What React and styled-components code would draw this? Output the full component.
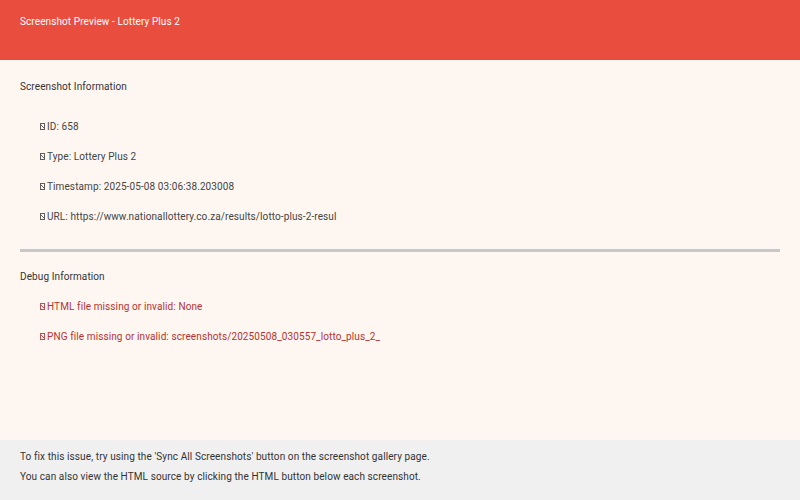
import React from 'react';
import styled, { createGlobalStyle } from 'styled-components';

const Global = createGlobalStyle`
  html, body { margin: 0; padding: 0; }
  body {
    width: 800px;
    height: 500px;
    overflow: hidden;
    font-family: Roboto, "Noto Sans", sans-serif;
    font-size: 10px;
    letter-spacing: 0.1px;
    background: #fef7f1;
  }
`;

const Page = styled.div`
  display: flex;
  flex-direction: column;
  height: 500px;
`;

const Header = styled.header`
  height: 60px;
  background: #e84d3d;
  color: #ffffff;
  padding: 16px 20px 0;
  line-height: 12px;
  box-sizing: border-box;
`;

const Main = styled.main`
  flex: 1;
  padding: 20px 20px 0;
  color: #333;
`;

const SectionTitle = styled.h3`
  margin: 0;
  font-size: 10px;
  font-weight: 400;
  line-height: 12px;
  padding-top: 1px;
`;

const List = styled.ul`
  list-style: none;
  margin: 0;
  padding: 0 0 0 20px;
  display: flex;
  flex-direction: column;
  gap: 18px;
  margin-top: ${p => p.$top}px;
`;

const Item = styled.li`
  line-height: 12px;
  height: 12px;
  color: ${p => (p.$error ? '#b83232' : '#444')};
  display: flex;
  align-items: center;
`;

const Tofu = styled.span`
  display: inline-block;
  width: 5px;
  height: 7px;
  border: 1px solid currentColor;
  box-sizing: border-box;
  margin: -1px 2px 0 0;
  opacity: 0.85;
  background:
    linear-gradient(45deg, transparent 45%, currentColor 45%, currentColor 55%, transparent 55%);
`;

const Divider = styled.hr`
  border: none;
  height: 3px;
  background: #c8c8c8;
  margin: 26px 0 18px;
`;

const Footer = styled.footer`
  height: 60px;
  background: #f0f0f0;
  padding: 11px 20px 0;
  box-sizing: border-box;
  color: #333;
  display: flex;
  flex-direction: column;
  gap: 8px;
  line-height: 12px;
`;

const info = [
  'ID: 658',
  'Type: Lottery Plus 2',
  'Timestamp: 2025-05-08 03:06:38.203008',
  'URL: https://www.nationallottery.co.za/results/lotto-plus-2-resul',
];

const errors = [
  'HTML file missing or invalid: None',
  'PNG file missing or invalid: screenshots/20250508_030557_lotto_plus_2_',
];

export default function App() {
  return (
    <>
      <Global />
      <Page>
        <Header>Screenshot Preview - Lottery Plus 2</Header>
        <Main>
          <SectionTitle>Screenshot Information</SectionTitle>
          <List $top={28}>
            {info.map(t => (
              <Item key={t}><Tofu />{t}</Item>
            ))}
          </List>
          <Divider />
          <SectionTitle>Debug Information</SectionTitle>
          <List $top={18}>
            {errors.map(t => (
              <Item key={t} $error><Tofu />{t}</Item>
            ))}
          </List>
        </Main>
        <Footer>
          <div>To fix this issue, try using the 'Sync All Screenshots' button on the screenshot gallery page.</div>
          <div>You can also view the HTML source by clicking the HTML button below each screenshot.</div>
        </Footer>
      </Page>
    </>
  );
}
